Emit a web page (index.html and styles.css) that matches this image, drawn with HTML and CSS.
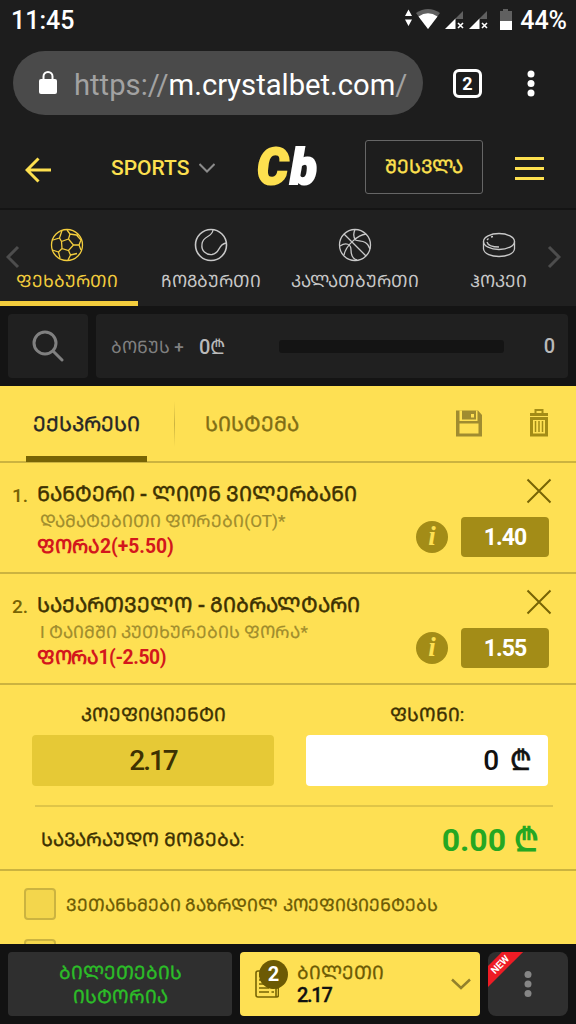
FILE: index.html
```
<!DOCTYPE html>
<html lang="ka">
<head>
  <meta charset="UTF-8">
  <title>Crystalbet</title>
  <link rel="stylesheet" href="styles.css">
</head>
<body>
  <div class="status-bar">
    <span class="clock">11:45</span>
    <div class="status-icons">
      <svg width="116" height="24" viewBox="0 0 116 24">
        <path d="M8.500 1.500 L12 8 H5z M8.500 18 L12 11.500 H5z" fill="#fff"/>
        <path d="M16 5 Q28 -3 40 5 L28 21z" fill="#606060"/>
        <path d="M18.500 8.500 Q28 2 37.500 8.500 L28 21z" fill="#fff"/>
        <path d="M63 3 V11 H55z" fill="#606060"/>
        <path d="M45 21 L55.500 10.500 V21z" fill="#fff"/>
        <path d="M58 15 l5 5 m0 -5 l-5 5" stroke="#fff" stroke-width="1.600"/>
        <path d="M87 3 V11 H79z" fill="#606060"/>
        <path d="M69 21 L79.500 10.500 V21z" fill="#fff"/>
        <path d="M82 15 l5 5 m0 -5 l-5 5" stroke="#fff" stroke-width="1.600"/>
        <path d="M100 3 H103 V1 H108 V3 H112 V13 H100z" fill="#606060"/>
        <path d="M100 13 H112 V22 H100z" fill="#fff"/>
      </svg>
      <span class="battery">44%</span>
    </div>
  </div>

  <div class="browser-bar">
    <div class="url">
      <svg width="18" height="24" viewBox="0 0 18 24">
        <path d="M4.500 9 V5.500 a4.500 4.500 0 0 1 9 0 V9" fill="none" stroke="#fff" stroke-width="2"/>
        <rect x="0" y="8" width="18" height="15" rx="2" fill="#fff"/>
      </svg>
      <span class="url-text"><i>https://</i>m.crystalbet.com<i>/</i></span>
    </div>
    <span class="tab-count">2</span>
    <svg class="dots" width="8" height="28" viewBox="0 0 8 28" fill="#fff">
      <circle cx="4" cy="4" r="3.500"/><circle cx="4" cy="13.500" r="3.500"/><circle cx="4" cy="23" r="3.500"/>
    </svg>
  </div>

  <header class="header">
    <svg class="back" width="26" height="26" viewBox="0 0 26 26" fill="none" stroke="#fde04f" stroke-width="3">
      <path d="M13.500 1.500 L2 13 L13.500 24.500 M2 13 H26"/>
    </svg>
    <span class="sports">SPORTS</span>
    <svg class="sports-arrow" width="16" height="10" viewBox="0 0 16 10" fill="none" stroke="#8b8b8b" stroke-width="2">
      <path d="M0.500 1 L8 8.500 L15.500 1"/>
    </svg>
    <span class="logo"><b>C</b>b</span>
    <a class="login">ᲨᲔᲡᲕᲚᲐ</a>
    <span class="burger"></span>
  </header>

  <nav class="sport-tabs">
    <svg class="nav-arrow" width="14" height="24" viewBox="0 0 14 24"><path d="M12 2 L2 12 L12 22"/></svg>
    <a class="sport active">
      <svg width="34" height="34" viewBox="0 0 34 34">
        <circle cx="17" cy="17" r="15.500"/>
        <path d="M11.500 13.500 L18.500 11 L23.500 17 L18.500 22.500 L12 20.500z M11.500 13.500 L9.500 10 L3 12 M18.500 11 L20 6 L17 2 M20 6 L26.500 7 L28 7 M23.500 17 H29 L31 12 M29 17 L31 22 M18.500 22.500 L20.500 27 L18 32 M20.500 27 L27 25.500 M12 20.500 L8.500 24 L2.500 22 M8.500 24 L10 30 M9.500 10 L12 2.500 M26.500 7 L31 12"/>
      </svg>
      <span>ᲤᲔᲮᲑᲣᲠᲗᲘ</span>
    </a>
    <a class="sport">
      <svg width="34" height="34" viewBox="0 0 34 34">
        <circle cx="17" cy="17" r="15.500" stroke-width="1.600"/>
        <path d="M19 2 C18 10 9 7 8 16 C7 23 12 27 18 26.500 C27 25 23 17 32 15"/>
      </svg>
      <span>ᲩᲝᲒᲑᲣᲠᲗᲘ</span>
    </a>
    <a class="sport">
      <svg width="34" height="34" viewBox="0 0 34 34">
        <circle cx="17" cy="17" r="15.500"/>
        <path d="M6 6 L28 28 M17 1.500 C15 6 16 10 17.500 12 C21 14 29 11 32 21 M28 6 C20 7 8 17 6 27 M2 18 C8 14 13 16 13 22 C13 27 15 31 19 32"/>
      </svg>
      <span>ᲙᲐᲚᲐᲗᲑᲣᲠᲗᲘ</span>
    </a>
    <a class="sport">
      <svg width="34" height="34" viewBox="0 0 34 34">
        <ellipse cx="17" cy="13.500" rx="15.500" ry="8"/>
        <path d="M1.500 13.500 V21 C3 31 31 31 32.500 21 V13.500 M5 14 C6 18 12 19 17 19 M5 12 L6.500 10.500 M9 9 L11 8.500"/>
      </svg>
      <span>ᲰᲝᲙᲔᲘ</span>
    </a>
    <svg class="nav-arrow" width="14" height="24" viewBox="0 0 14 24"><path d="M2 2 L12 12 L2 22"/></svg>
  </nav>

  <div class="tools">
    <div class="search">
      <svg width="32" height="32" viewBox="0 0 32 32" fill="none" stroke="#808080" stroke-width="3">
        <circle cx="13" cy="13" r="11"/><path d="M21 21 L30 30" stroke-linecap="round"/>
      </svg>
    </div>
    <div class="bonus">
      <span class="bonus-label">ᲑᲝᲜᲣᲡ +</span>
      <span class="bonus-sum">0₾</span>
      <span class="bonus-progress"></span>
      <span class="bonus-count">0</span>
    </div>
  </div>

  <main class="ticket">
    <div class="ticket-tabs">
      <a class="ticket-tab active"><span>ᲔᲥᲡᲞᲠᲔᲡᲘ</span></a>
      <span class="divider"></span>
      <a class="ticket-tab system"><span>ᲡᲘᲡᲢᲔᲛᲐ</span></a>
      <svg class="save" width="26" height="27" viewBox="0 0 26 27">
        <path d="M0 0.500 H22 L26 5 V26.500 H0z" fill="#a08c30"/>
        <path d="M3.500 0.500 H6 V9.500 H20 V0.500 H21.500 V11 H3.500z M3.500 13.500 H22.500 V23.500 H3.500z" fill="#fee053"/>
        <path d="M15 4 h3 v3.500 h-3z" fill="#fee053"/>
      </svg>
      <svg class="trash" width="18" height="28" viewBox="0 0 18 28" fill="none" stroke="#a38c17">
        <path d="M0 5.500 H18" stroke-width="3"/>
        <path d="M5.500 5 V1 H12.500 V5" stroke-width="2"/>
        <path d="M1.500 9.500 H16.500 V26 H1.500z" stroke-width="3"/>
        <path d="M5.500 12 V23 M9 12 V23 M12.500 12 V23" stroke-width="1.500"/>
      </svg>
    </div>

    <section class="bet">
      <span class="num">1.</span>
      <div class="bet-info">
        <div class="teams">ᲜᲐᲜᲢᲔᲠᲘ - ᲚᲘᲝᲜ ᲕᲘᲚᲔᲠᲑᲐᲜᲘ</div>
        <div class="market">ᲓᲐᲛᲐᲢᲔᲑᲘᲗᲘ ᲤᲝᲠᲔᲑᲘ(OT)*</div>
        <div class="pick">ᲤᲝᲠᲐ2(+5.50)</div>
      </div>
      <div class="bet-side">
        <svg width="26" height="26" viewBox="0 0 26 26"><path d="M1.500 1.500 L24.500 24.500 M24.500 1.500 L1.500 24.500" stroke="#776405" stroke-width="2"/></svg>
        <div class="odd-row"><span class="info">i</span><span class="odd">1.40</span></div>
      </div>
    </section>

    <section class="bet">
      <span class="num">2.</span>
      <div class="bet-info">
        <div class="teams">ᲡᲐᲥᲐᲠᲗᲕᲔᲚᲝ - ᲒᲘᲑᲠᲐᲚᲢᲐᲠᲘ</div>
        <div class="market">I ᲢᲐᲘᲛᲨᲘ ᲙᲣᲗᲮᲣᲠᲔᲑᲘᲡ ᲤᲝᲠᲐ*</div>
        <div class="pick tight">ᲤᲝᲠᲐ1(-2.50)</div>
      </div>
      <div class="bet-side">
        <svg width="26" height="26" viewBox="0 0 26 26"><path d="M1.500 1.500 L24.500 24.500 M24.500 1.500 L1.500 24.500" stroke="#776405" stroke-width="2"/></svg>
        <div class="odd-row"><span class="info">i</span><span class="odd">1.55</span></div>
      </div>
    </section>

    <section class="stake">
      <div class="fields">
        <div class="field">
          <label>ᲙᲝᲔᲤᲘᲪᲘᲔᲜᲢᲘ</label>
          <div class="coef">2.17</div>
        </div>
        <div class="field">
          <label>ᲤᲡᲝᲜᲘ:</label>
          <div class="amount">0 <span>₾</span></div>
        </div>
      </div>
      <div class="win">
        <span class="win-label">ᲡᲐᲕᲐᲠᲐᲣᲓᲝ ᲛᲝᲒᲔᲑᲐ:</span>
        <span class="win-sum">0.00 ₾</span>
      </div>
    </section>

    <div class="options">
      <div class="option"><span class="check"></span><span>ᲕᲔᲗᲐᲜᲮᲛᲔᲑᲘ ᲒᲐᲖᲠᲓᲘᲚ ᲙᲝᲔᲤᲘᲪᲘᲔᲜᲢᲔᲑᲡ</span></div>
      <div class="option"><span class="check"></span></div>
    </div>
  </main>

  <footer class="footer">
    <a class="history">ᲑᲘᲚᲔᲗᲔᲑᲘᲡ<br>ᲘᲡᲢᲝᲠᲘᲐ</a>
    <a class="current">
      <span class="paper">
        <svg width="24" height="28" viewBox="0 0 24 28" fill="none" stroke="#776405" stroke-width="1.600">
          <path d="M3 1 H21 V27 H3 a2 2 0 0 1 -2 -2 V3 a2 2 0 0 1 2 -2z M21 18 H23.500 V25 a2 2 0 0 1 -2 2"/>
          <path d="M4 6 H9 M4 10 H15 M4 14 H12 M4 18 H14 M4 22 H14 M16.500 18 H19 M16.500 22 H19"/>
        </svg>
        <span class="badge">2</span>
      </span>
      <span class="current-text"><span class="current-title">ᲑᲘᲚᲔᲗᲘ</span><span class="current-odd">2.17</span></span>
      <svg class="chev" width="20" height="12" viewBox="0 0 20 12" fill="none" stroke="#93802b" stroke-width="2.500"><path d="M1 1.500 L10 10 L19 1.500"/></svg>
    </a>
    <a class="more">
      <span class="ribbon">NEW</span>
      <svg width="8" height="28" viewBox="0 0 8 28" fill="#868686">
        <circle cx="4" cy="4.500" r="3.500"/><circle cx="4" cy="14" r="3.500"/><circle cx="4" cy="23.500" r="3.500"/>
      </svg>
    </a>
  </footer>
</body>
</html>
```
FILE: styles.css
```
* {
  box-sizing: border-box;
}
body {
  margin: 0;
  width: 576px;
  height: 1024px;
  overflow: hidden;
  display: flex;
  flex-direction: column;
  background: #1d1d1d;
  font-family: Roboto, "DejaVu Sans", sans-serif;
  white-space: nowrap;
}
svg {
  display: block;
  flex: none;
}
i {
  font-style: normal;
}

/* phone + browser */
.status-bar {
  height: 40px;
  padding: 0 9px 0 11px;
  display: flex;
  justify-content: space-between;
  align-items: center;
  color: #fff;
  font-size: 25px;
  font-weight: 500;
}
.status-icons {
  display: flex;
  align-items: center;
  gap: 4px;
}
.browser-bar {
  height: 88px;
  padding: 11px 40px 13px 13px;
  display: flex;
  align-items: center;
}
.url {
  width: 410px;
  height: 64px;
  border-radius: 32px;
  background: #4a4a4a;
  display: flex;
  align-items: center;
  padding-left: 26px;
  color: #fff;
  font-size: 29.2px;
}
.url-text {
  margin-left: 17px;
  padding-top: 3px;
}
.url i {
  color: #a2a2a2;
}
.tab-count {
  width: 29px;
  height: 29px;
  margin-left: 30px;
  border: 3px solid #fff;
  border-radius: 6px;
  color: #fff;
  font-size: 18px;
  font-weight: 700;
  line-height: 24px;
  text-align: center;
}
.dots {
  margin: 2px 0 0 45px;
}

.header {
  height: 80px;
  padding: 0 32px 0 26px;
  display: flex;
  align-items: center;
}
.back {
  margin: 3px 0 0 -1px;
}
.sports {
  margin-left: 60px;
  width: 78px;
  color: #fde04f;
  font-size: 21px;
  font-weight: 500;
}
.sports-arrow {
  margin-left: 10px;
}
.logo {
  margin-left: 42px;
  width: 65px;
  color: #fff;
  font: italic 900 49px/50px Roboto, sans-serif;
  letter-spacing: 2px;
  -webkit-text-stroke: 2px;
}
.logo b {
  color: #fde04f;
  font-weight: 900;
}
.login {
  width: 118px;
  height: 54px;
  margin: -2px 0 0 43px;
  border: 1px solid #666;
  border-radius: 3px;
  color: #fde04f;
  font-size: 18.8px;
  line-height: 52px;
  text-align: center;
  -webkit-text-stroke: 0.4px;
}
.burger {
  width: 29px;
  height: 23px;
  margin-left: 32px;
  border: solid #fde04f;
  border-width: 3px 0;
  background: linear-gradient(#fde04f, #fde04f) center / 100% 3px no-repeat;
}

/* sports carousel */
.sport-tabs {
  height: 98px;
  border-top: 2px solid #141414;
  background: #202020;
  position: relative;
  display: grid;
  grid-template-columns: repeat(4, 144px);
}
.sport {
  display: flex;
  flex-direction: column;
  align-items: center;
  padding: 18px 4px 0 0;
  margin-right: 6px;
  color: #c8c8c8;
  font-size: 17px;
  line-height: 38px;
}
.sport span {
  margin-left: -1px;
}
.sport svg {
  fill: none;
  stroke: currentColor;
  stroke-width: 1.3;
}
.sport.active {
  color: #f3cd3d;
  border-bottom: 5px solid #f3cd3d;
}
.nav-arrow {
  position: absolute;
  left: 6px;
  top: 35px;
  fill: none;
  stroke: #4d4d4d;
  stroke-width: 3;
}
.nav-arrow:last-child {
  left: 547px;
}

.tools {
  height: 80px;
  padding: 8px;
  background: #141414;
  display: flex;
  gap: 8px;
}
.search,
.bonus {
  height: 64px;
  border-radius: 4px;
  background: #202020;
  display: flex;
  align-items: center;
}
.search {
  width: 80px;
  justify-content: center;
}
.bonus {
  flex: 1;
  padding: 0 13px 0 15px;
  color: #b9b9b9;
  font-size: 20px;
  font-weight: 500;
}
.bonus-label {
  width: 73px;
  color: #808080;
  font-size: 17px;
}
.bonus-sum {
  margin-left: 15px;
  width: 80px;
}
.bonus-progress {
  width: 225px;
  height: 13px;
  border-radius: 3px;
  background: #141414;
}
.bonus-count {
  margin-left: auto;
}

/* ticket */
.ticket {
  height: 558px;
  overflow: hidden;
  background: #fee053;
  color: #3d3102;
}
.ticket-tabs {
  height: 77px;
  padding-left: 26px;
  border-bottom: 2px solid #cbb340;
  display: flex;
  align-items: center;
}
.ticket-tab {
  width: 121px;
  height: 76px;
  font-size: 20.5px;
  line-height: 76px;
  text-align: center;
  color: #262626;
  -webkit-text-stroke: 0.4px;
}
.ticket-tab.active {
  border-bottom: 6px solid #776405;
}
.ticket-tab.system {
  margin-left: 16px;
  color: #806d15;
}
.divider {
  width: 1px;
  height: 46px;
  margin-left: 27px;
  background: linear-gradient(#fee053, #cbb340, #fee053);
}
.save {
  margin: -1px 0 0 144px;
}
.trash {
  margin: -2px 0 0 48px;
}
.bet {
  height: 111px;
  padding: 17px 27px 0 12px;
  border-bottom: 2px solid #cbb340;
  display: flex;
}
.num {
  width: 25px;
  color: #776405;
  font-size: 19px;
  font-weight: 500;
  line-height: 31px;
}
.bet-info {
  flex: 1;
}
.teams {
  font-size: 20.6px;
  line-height: 29px;
  font-weight: 500;
  -webkit-text-stroke: 0.5px;
}
.market {
  padding-left: 3px;
  color: #a18d2d;
  font-size: 17.2px;
  line-height: 25px;
  -webkit-text-stroke: 0.2px;
}
.pick {
  color: #d3171c;
  font-size: 19.3px;
  font-weight: 700;
  line-height: 26px;
}
.pick.tight {
  letter-spacing: -0.4px;
}
.bet-side {
  display: flex;
  flex-direction: column;
  align-items: flex-end;
  gap: 13px;
  margin-top: -3px;
}
.bet-side > svg {
  margin: 1px -3px 0 0;
}
.odd-row {
  display: flex;
  align-items: center;
  gap: 13px;
}
.info {
  width: 32px;
  height: 32px;
  border-radius: 50%;
  background: #a38c17;
  color: #fee053;
  font: italic bold 27px/31px "Liberation Serif", serif;
  text-align: center;
}
.odd {
  width: 88px;
  height: 40px;
  border-radius: 4px;
  background: #a38c17;
  color: #fff;
  font-size: 23px;
  font-weight: 700;
  line-height: 42px;
  letter-spacing: -1px;
  text-align: center;
}
.stake {
  height: 186px;
  border-bottom: 2px solid #cbb340;
  padding: 15px 23px 0 32px;
}
.fields {
  display: flex;
  gap: 32px;
}
.field {
  width: 242px;
  text-align: center;
}
.field label {
  display: block;
  height: 35px;
  font-size: 18.5px;
  line-height: 30px;
  -webkit-text-stroke: 0.4px;
}
.coef,
.amount {
  height: 51px;
  border-radius: 4px;
  font-size: 28px;
  font-weight: 500;
  line-height: 52px;
}
.coef {
  background: #e6c936;
  letter-spacing: -2px;
}
.amount {
  background: #fff;
  color: #111;
  text-align: right;
  padding-right: 16px;
  word-spacing: 4px;
}
.amount span {
  -webkit-text-stroke: 0.6px;
}
.win {
  margin: 19px 0 0 3px;
  border-top: 2px solid #dfc548;
  height: 65px;
  padding: 0 14px 0 6px;
  display: flex;
  justify-content: space-between;
  align-items: center;
}
.win-label {
  font-size: 18.8px;
  -webkit-text-stroke: 0.4px;
}
.win-sum {
  color: #25a722;
  font-size: 32px;
  font-weight: 700;
}
.options {
  padding: 17px 24px;
}
.option {
  display: flex;
  align-items: center;
  height: 32px;
  margin-bottom: 19px;
  color: #6c5a04;
  font-size: 17.2px;
  -webkit-text-stroke: 0.3px;
}
.check {
  width: 32px;
  height: 32px;
  margin-right: 10px;
  border: 2px solid #cbb340;
  border-radius: 4px;
  background: #f3d64c;
}

/* bottom bar */
.footer {
  height: 80px;
  padding: 8px;
  background: #121212;
  display: flex;
  gap: 8px;
}
.history {
  width: 224px;
  border-radius: 4px;
  background: #2f2f2f;
  color: #2cbd28;
  font-size: 18.5px;
  line-height: 24px;
  padding-top: 9px;
  text-align: center;
  -webkit-text-stroke: 0.4px;
}
.current {
  width: 240px;
  border-radius: 4px;
  background: #fee053;
  display: flex;
  align-items: center;
  padding: 0 9px 0 15px;
}
.paper {
  position: relative;
}
.badge {
  position: absolute;
  left: 4px;
  top: -10px;
  width: 29px;
  height: 29px;
  border-radius: 50%;
  background: #6c5a04;
  color: #fff;
  font-size: 20px;
  font-weight: 700;
  line-height: 29px;
  text-align: center;
}
.current-text {
  margin: -2px 0 0 18px;
}
.current-title,
.current-odd {
  display: block;
  color: #6c5a04;
  font-size: 18.5px;
  line-height: 24px;
  -webkit-text-stroke: 0.3px;
}
.current-odd {
  color: #111;
  font-size: 20px;
  font-weight: 500;
  line-height: 20px;
  letter-spacing: -1.3px;
}
.chev {
  margin-left: auto;
}
.more {
  width: 80px;
  border-radius: 8px;
  background: #2f2f2f;
  overflow: hidden;
  position: relative;
  display: flex;
  align-items: center;
  justify-content: center;
}
.ribbon {
  position: absolute;
  left: -28px;
  top: 5px;
  width: 80px;
  height: 15px;
  background: #ee1c25;
  color: #fff;
  font-size: 10px;
  font-weight: 700;
  line-height: 15px;
  text-align: center;
  transform: rotate(-45deg);
}
```
